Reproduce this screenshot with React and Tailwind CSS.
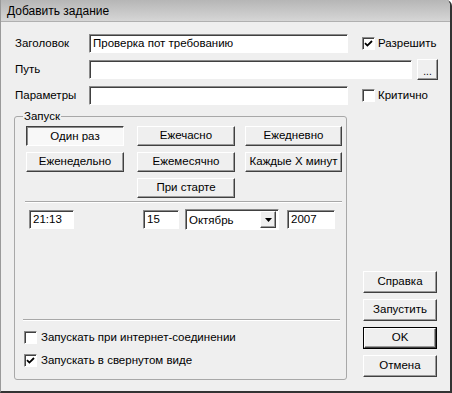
import React from 'react';

const raised =
  'border border-t-white border-l-white border-r-[#404040] border-b-[#404040] shadow-[inset_-1px_-1px_0_#9a9a9a] bg-[#efefef]';
const sunken =
  'border border-t-[#8a8a8a] border-l-[#8a8a8a] border-r-white border-b-white shadow-[inset_1px_1px_0_#404040] bg-white';

function Btn({ children, className = '', pressed = false, isDefault = false }) {
  if (pressed) {
    return (
      <div
        className={`flex items-center justify-center border border-t-[#404040] border-l-[#404040] border-r-white border-b-white shadow-[inset_1px_1px_0_#8a8a8a] bg-[#f8f8f8] pt-px ${className}`}
      >
        {children}
      </div>
    );
  }
  if (isDefault) {
    return (
      <div className={`border border-black ${className}`}>
        <div className={`w-full h-full flex items-center justify-center ${raised}`}>{children}</div>
      </div>
    );
  }
  return <div className={`flex items-center justify-center ${raised} ${className}`}>{children}</div>;
}

function Field({ value, className = '' }) {
  return (
    <div className={`${sunken} flex items-center pl-[3px] leading-none ${className}`}>{value}</div>
  );
}

function Check({ checked }) {
  return (
    <div className={`${sunken} w-[13px] h-[13px] shrink-0 flex items-center justify-center`}>
      {checked && (
        <svg width="9" height="9" viewBox="0 0 9 9">
          <path d="M1 4.2 L3.4 6.6 L8 2" fill="none" stroke="#000" strokeWidth="1.8" />
        </svg>
      )}
    </div>
  );
}

export default function App() {
  return (
    <div className="w-[452px] h-[393px] overflow-hidden flex flex-col bg-[#efefef] text-[11.5px] text-black font-['Liberation_Sans',Arial,sans-serif] border-l border-l-[#9a9a9a] border-r-2 border-r-[#333333] border-b-2 border-b-[#333333] rounded-tr-[6px]">
      {/* title bar */}
      <div className="h-[22px] shrink-0 flex items-center pl-[6px] bg-gradient-to-b from-[#b6b6b6] via-[#c6c6c6] to-[#d6d6d6] border-b border-[#b0b0b0] text-[12px]">
        Добавить задание
      </div>

      <div className="flex-1 flex flex-col pl-[14px] pt-[12px]">
        <div className="flex items-center h-[19px]">
          <div className="w-[74px]">Заголовок</div>
          <Field value="Проверка пот требованию" className="w-[259px] h-[19px]" />
          <div className="ml-[14px]">
            <Check checked />
          </div>
          <div className="ml-[3px]">Разрешить</div>
        </div>

        <div className="flex items-center h-[19px] mt-[7px]">
          <div className="w-[74px]">Путь</div>
          <Field value="" className="w-[323px] h-[19px]" />
          <Btn className="ml-[5px] w-[21px] h-[21px] text-[10px] leading-none">
            <span className="mt-[5px]">...</span>
          </Btn>
        </div>

        <div className="flex items-center h-[19px] mt-[7px]">
          <div className="w-[74px]">Параметры</div>
          <Field value="" className="w-[259px] h-[19px]" />
          <div className="ml-[14px]">
            <Check />
          </div>
          <div className="ml-[3px]">Критично</div>
        </div>

        <div className="flex mt-[11px] -ml-px">
          {/* group box */}
          <div className="relative w-[333px] h-[264px] border border-[#a8a8a8] rounded-[3px] flex flex-col pt-[9px]">
            <span className="absolute left-[8px] -top-[8px] px-px bg-[#efefef] leading-[14px]">Запуск</span>

            <div className="flex pl-[11px]">
              <Btn pressed className="w-[98px] h-[20px]">Один раз</Btn>
              <Btn className="ml-[13px] w-[98px] h-[20px]">Ежечасно</Btn>
              <Btn className="ml-[10px] w-[97px] h-[20px]">Ежедневно</Btn>
            </div>
            <div className="flex pl-[11px] mt-[6px]">
              <Btn className="w-[98px] h-[20px]">Еженедельно</Btn>
              <Btn className="ml-[13px] w-[98px] h-[20px]">Ежемесячно</Btn>
              <Btn className="ml-[10px] w-[97px] h-[20px]">Каждые Х минут</Btn>
            </div>
            <div className="flex pl-[122px] mt-[6px]">
              <Btn className="w-[98px] h-[20px]">При старте</Btn>
            </div>

            <div className="ml-[10px] mr-[4px] mt-[3px] border-t border-t-[#a8a8a8] border-b border-b-white" />

            <div className="flex items-center mt-[6px] h-[21px]">
              <Field value="21:13" className="ml-[14px] w-[45px] h-[19px]" />
              <Field value="15" className="ml-[69px] w-[36px] h-[19px]" />
              <div className={`${sunken} ml-[6px] w-[94px] h-[21px] flex items-center pl-[3px] pr-[2px]`}>
                <span className="flex-1 pt-[2px]">Октябрь</span>
                <div className={`${raised} w-[16px] h-[17px] flex items-center justify-center`}>
                  <svg width="7" height="4" viewBox="0 0 7 4">
                    <path d="M0 0 H7 L3.5 4 Z" fill="#000" />
                  </svg>
                </div>
              </div>
              <Field value="2007" className="ml-[8px] w-[48px] h-[19px]" />
            </div>

            <div className="mt-auto ml-[8px] mr-[6px] border-t border-t-[#a8a8a8] border-b border-b-white" />
            <div className="flex items-center ml-[9px] mt-[10px] h-[13px]">
              <Check />
              <span className="ml-[4px]">Запускать при интернет-соединении</span>
            </div>
            <div className="flex items-center ml-[9px] mt-[10px] h-[13px] mb-[12px]">
              <Check checked />
              <span className="ml-[4px]">Запускать в свернутом виде</span>
            </div>
          </div>

          {/* right buttons */}
          <div className="ml-[16px] flex flex-col justify-end gap-[6px] pb-[3px]">
            <Btn className="w-[74px] h-[22px]">Справка</Btn>
            <Btn className="w-[74px] h-[22px]">Запустить</Btn>
            <Btn isDefault className="w-[74px] h-[22px]">OK</Btn>
            <Btn className="w-[74px] h-[22px]">Отмена</Btn>
          </div>
        </div>
      </div>
    </div>
  );
}
